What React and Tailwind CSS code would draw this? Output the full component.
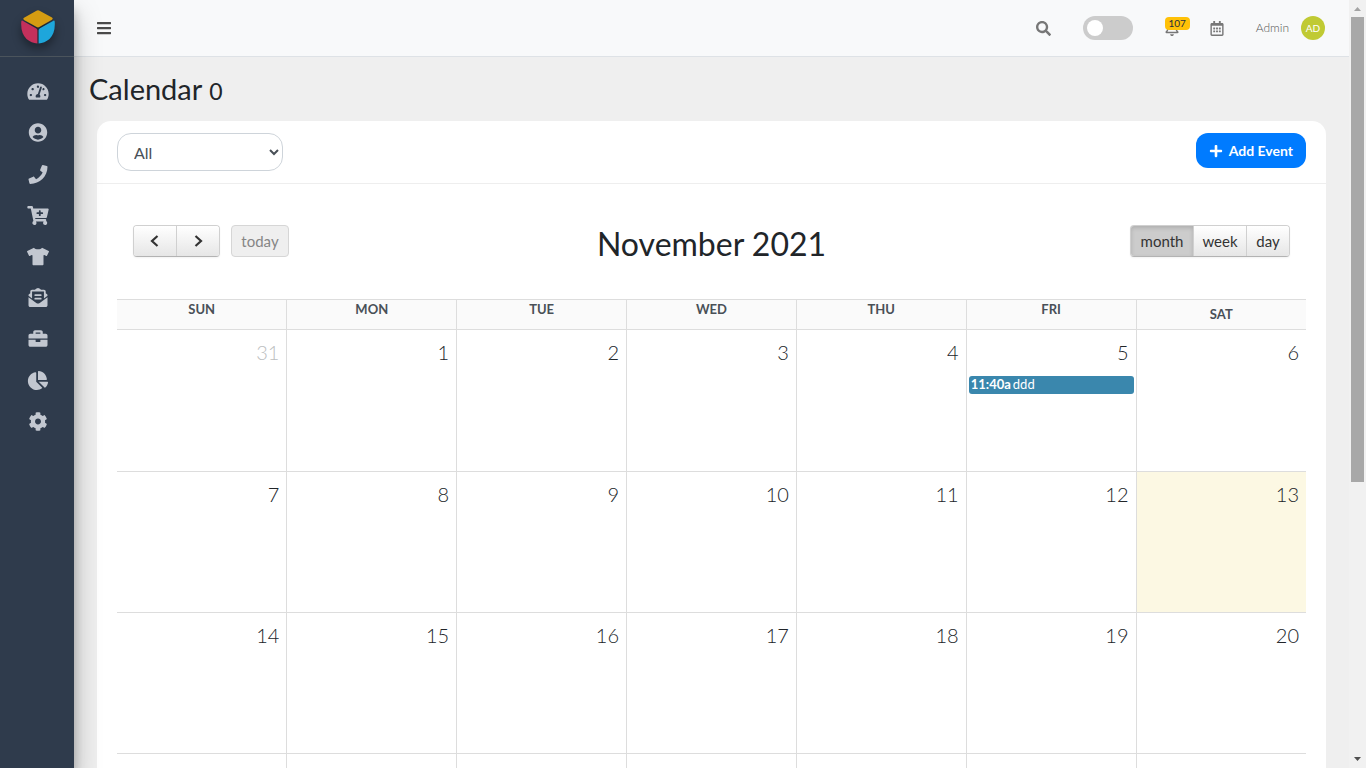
import {
  FaTachometerAlt,
  FaUserCircle,
  FaPhone,
  FaCartPlus,
  FaTshirt,
  FaEnvelopeOpenText,
  FaBriefcase,
  FaChartPie,
  FaCog,
  FaBars,
  FaSearch,
  FaRegBell,
  FaRegCalendarAlt,
  FaPlus,
} from "react-icons/fa";

const navItems = [
  { label: "Dashboard", Icon: FaTachometerAlt },
  { label: "Customers", Icon: FaUserCircle },
  { label: "Calls", Icon: FaPhone },
  { label: "Orders", Icon: FaCartPlus },
  { label: "Products", Icon: FaTshirt },
  { label: "Mail", Icon: FaEnvelopeOpenText },
  { label: "Jobs", Icon: FaBriefcase },
  { label: "Reports", Icon: FaChartPie },
  { label: "Settings", Icon: FaCog },
];

const weekdays = ["SUN", "MON", "TUE", "WED", "THU", "FRI", "SAT"];

const weeks = [
  [31, 1, 2, 3, 4, 5, 6],
  [7, 8, 9, 10, 11, 12, 13],
  [14, 15, 16, 17, 18, 19, 20],
];

function Logo() {
  return (
    <svg viewBox="0 0 34 34" className="h-[34px] w-[34px] drop-shadow-[0_5px_5px_rgba(0,0,0,0.4)]" aria-hidden="true">
      <path d="M17 0.3 Q18 0.3 19 0.9 L31 7.6 Q32.6 8.6 31 9.7 L18.3 17 Q17 17.8 15.7 17 L3 9.9 Q1.4 8.8 3 7.8 L15 0.9 Q16 0.3 17 0.3Z" fill="#d59c12" />
      <path d="M1.6 10.8 L15 18.3 Q16.4 19 16.4 20.4 V33.6 Q10.5 33 5.5 29 Q-0.6 23 0.3 11.5 Q0.6 10.2 1.6 10.8Z" fill="#c4305c" />
      <path d="M32.4 10.8 L19 18.3 Q17.6 19 17.6 20.4 V33.6 Q23.5 33 28.5 29 Q34.6 23 33.7 11.5 Q33.4 10.2 32.4 10.8Z" fill="#1ea6db" />
    </svg>
  );
}

function Sidebar() {
  return (
    <aside className="z-10 flex w-[74px] shrink-0 flex-col bg-[#2f3b4c] shadow-[0_14px_28px_rgba(0,0,0,0.25),0_10px_10px_rgba(0,0,0,0.22)]">
      <a href="#" aria-label="Home" className="flex h-[57px] shrink-0 justify-center border-b border-[#4b545c] pt-[10px] pl-[2px]">
        <Logo />
      </a>
      <nav className="mt-[14px] flex h-[371px] flex-col pl-[2px]">
        {navItems.map(({ label, Icon }) => (
          <a key={label} href="#" aria-label={label} className="flex flex-1 items-center justify-center text-[#c2c7d0]">
            <Icon className="h-[19px] w-[22px]" />
          </a>
        ))}
      </nav>
    </aside>
  );
}

function TopBar() {
  return (
    <header className="flex h-[57px] shrink-0 items-center border-b border-[#dee2e6] bg-[#f8f9fa] pr-6 pl-[23px]">
      <button type="button" aria-label="Toggle menu" className="text-[#4a4a4a]">
        <FaBars className="h-4 w-[14px]" />
      </button>
      <div className="ml-auto flex items-center text-[#777777]">
        <button type="button" aria-label="Search">
          <FaSearch className="h-[15px] w-[15px]" />
        </button>
        <label className="ml-8 flex cursor-pointer">
          <input type="checkbox" role="switch" aria-label="Dark mode" className="peer sr-only" />
          <span className="flex h-6 w-[50px] items-center rounded-full bg-[#cccccc] px-1">
            <span className="h-4 w-4 rounded-full bg-white" />
          </span>
        </label>
        <button type="button" aria-label="Notifications" className="relative ml-8">
          <FaRegBell className="h-[15px] w-[14px]" />
          <span className="absolute -top-[4px] left-0 flex h-[13px] w-[25px] items-center justify-center rounded bg-[#ffc107] text-[10px] text-[#1f2d3d]">
            107
          </span>
        </button>
        <button type="button" aria-label="Calendar" className="ml-[31px]">
          <FaRegCalendarAlt className="h-[15px] w-[14px]" />
        </button>
        <a href="#" className="ml-8 flex items-center gap-3 text-[12px] font-light text-[#555555]">
          Admin
          <span className="flex h-6 w-6 items-center justify-center rounded-full bg-[#c0ca33] text-[10px] font-normal text-white">
            AD
          </span>
        </a>
      </div>
    </header>
  );
}

const plainButton = "bg-linear-to-b from-white to-[#e6e6e6] text-[#333333]";

function Toolbar() {
  return (
    <div className="flex items-start justify-between px-9 pt-[41px] pb-9">
      <div className="flex flex-1 gap-[11px] text-[15px]">
        <div className="flex h-8 overflow-hidden rounded border border-[#d0d0d0] border-b-[#b3b3b3] shadow-xs">
          <button type="button" aria-label="Previous" className={`flex w-[42px] items-center justify-center ${plainButton}`}>
            <Chevron d="M7.5 1 L2 6 L7.5 11" />
          </button>
          <button type="button" aria-label="Next" className={`flex w-[43px] items-center justify-center border-l border-[#d0d0d0] ${plainButton}`}>
            <Chevron d="M2.5 1 L8 6 L2.5 11" />
          </button>
        </div>
        <button type="button" disabled className="h-8 w-[58px] rounded border border-[#d6d6d6] bg-[#efefef] text-[#868686]">
          today
        </button>
      </div>
      <h2 className="text-[32px] leading-[38px] text-[#212529]">November 2021</h2>
      <div className="flex flex-1 justify-end text-[15px]">
        <div className="flex h-8 overflow-hidden rounded border border-[#d0d0d0] border-b-[#b3b3b3] shadow-xs">
          <button type="button" aria-pressed="true" className="w-[62px] bg-[#cccccc] text-[#333333] shadow-[inset_0_2px_4px_rgba(0,0,0,0.15)]">
            month
          </button>
          <button type="button" className={`w-[53px] border-l border-[#d0d0d0] ${plainButton}`}>
            week
          </button>
          <button type="button" className={`w-[43px] border-l border-[#d0d0d0] ${plainButton}`}>
            day
          </button>
        </div>
      </div>
    </div>
  );
}

function Chevron({ d }) {
  return (
    <svg viewBox="0 0 10 12" className="h-3 w-[10px]" fill="none" stroke="#333333" strokeWidth="2.2" aria-hidden="true">
      <path d={d} />
    </svg>
  );
}

function Month() {
  return (
    <div className="px-5">
      <table className="w-full table-fixed border-collapse">
        <thead>
          <tr className="h-[30px] border-y border-[#dddddd] bg-[#fafafa]">
            {weekdays.map((day) => (
              <th
                key={day}
                scope="col"
                className="border-l border-[#dddddd] p-0 pb-[10px] text-[13px] leading-[19px] font-bold text-[#495057] first:border-l-0 last:pb-0"
              >
                {day}
              </th>
            ))}
          </tr>
        </thead>
        <tbody>
          {weeks.map((week) => (
            <tr key={week[0]} className="h-[141px] border-b border-[#dddddd] first:h-[142px]">
              {week.map((day) => (
                <td
                  key={day}
                  className={`border-l border-[#dddddd] p-0 align-top first:border-l-0 ${day === 13 ? "bg-[#fcf8e3]" : ""}`}
                >
                  <div className={`px-[7px] pt-[7px] text-right text-[20px] leading-[30px] font-light ${day === 31 ? "text-[#bcbec0]" : "text-[#212529]"}`}>
                    {day}
                  </div>
                  {day === 5 && (
                    <a href="#" className="mx-[2px] mt-[9px] flex h-[18px] items-center gap-[2px] rounded-[3px] bg-[#3a87ad] px-[2px] text-[13px] text-white">
                      <b>11:40a</b>
                      <span>ddd</span>
                    </a>
                  )}
                </td>
              ))}
            </tr>
          ))}
          <tr className="h-[141px] border-b border-[#dddddd]">
            {weekdays.map((day) => (
              <td key={day} className="border-l border-[#dddddd] p-0 first:border-l-0" />
            ))}
          </tr>
        </tbody>
      </table>
    </div>
  );
}

function ScrollRail() {
  return (
    <div className="flex w-[17px] shrink-0 flex-col items-center bg-[#f1f1f1]" aria-hidden="true">
      <svg viewBox="0 0 17 17" className="h-[17px] w-[17px] shrink-0">
        <path d="M5 11 L8.5 7 L12 11Z" fill="#a3a3a3" />
      </svg>
      <div className="w-[13px] flex-[19] bg-[#a8a8a8]" />
      <div className="flex-[11]" />
      <svg viewBox="0 0 17 17" className="h-[17px] w-[17px] shrink-0">
        <path d="M5 6 L8.5 10 L12 6Z" fill="#505050" />
      </svg>
    </div>
  );
}

export default function App() {
  return (
    <div className="flex h-screen overflow-hidden bg-[#efefef] font-['Lato',sans-serif] text-[#212529]">
      <Sidebar />
      <div className="flex min-w-0 flex-1 flex-col">
        <TopBar />
        <main className="min-h-0 flex-1 overflow-hidden">
          <h1 className="px-[15px] pt-[14px] text-[29px] leading-9">
            Calendar <small className="text-[23px]">0</small>
          </h1>
          <section className="mx-[23px] mt-3 rounded-t-[14px] bg-white">
            <div className="flex h-[63px] items-start justify-between border-b border-[#eeeeee] px-5 pt-3">
              <select
                aria-label="Event filter"
                defaultValue="All"
                className="h-[38px] w-[166px] rounded-[14px] border border-[#ced4da] bg-white px-3 text-[16px] text-[#495057]"
              >
                <option>All</option>
              </select>
              <button
                type="button"
                className="flex h-[35px] items-center gap-1.5 rounded-xl bg-[#007bff] px-[13px] text-[14px] font-bold text-white"
              >
                <FaPlus className="h-[14px] w-[14px]" />
                Add Event
              </button>
            </div>
            <Toolbar />
            <Month />
          </section>
        </main>
      </div>
      <ScrollRail />
    </div>
  );
}
